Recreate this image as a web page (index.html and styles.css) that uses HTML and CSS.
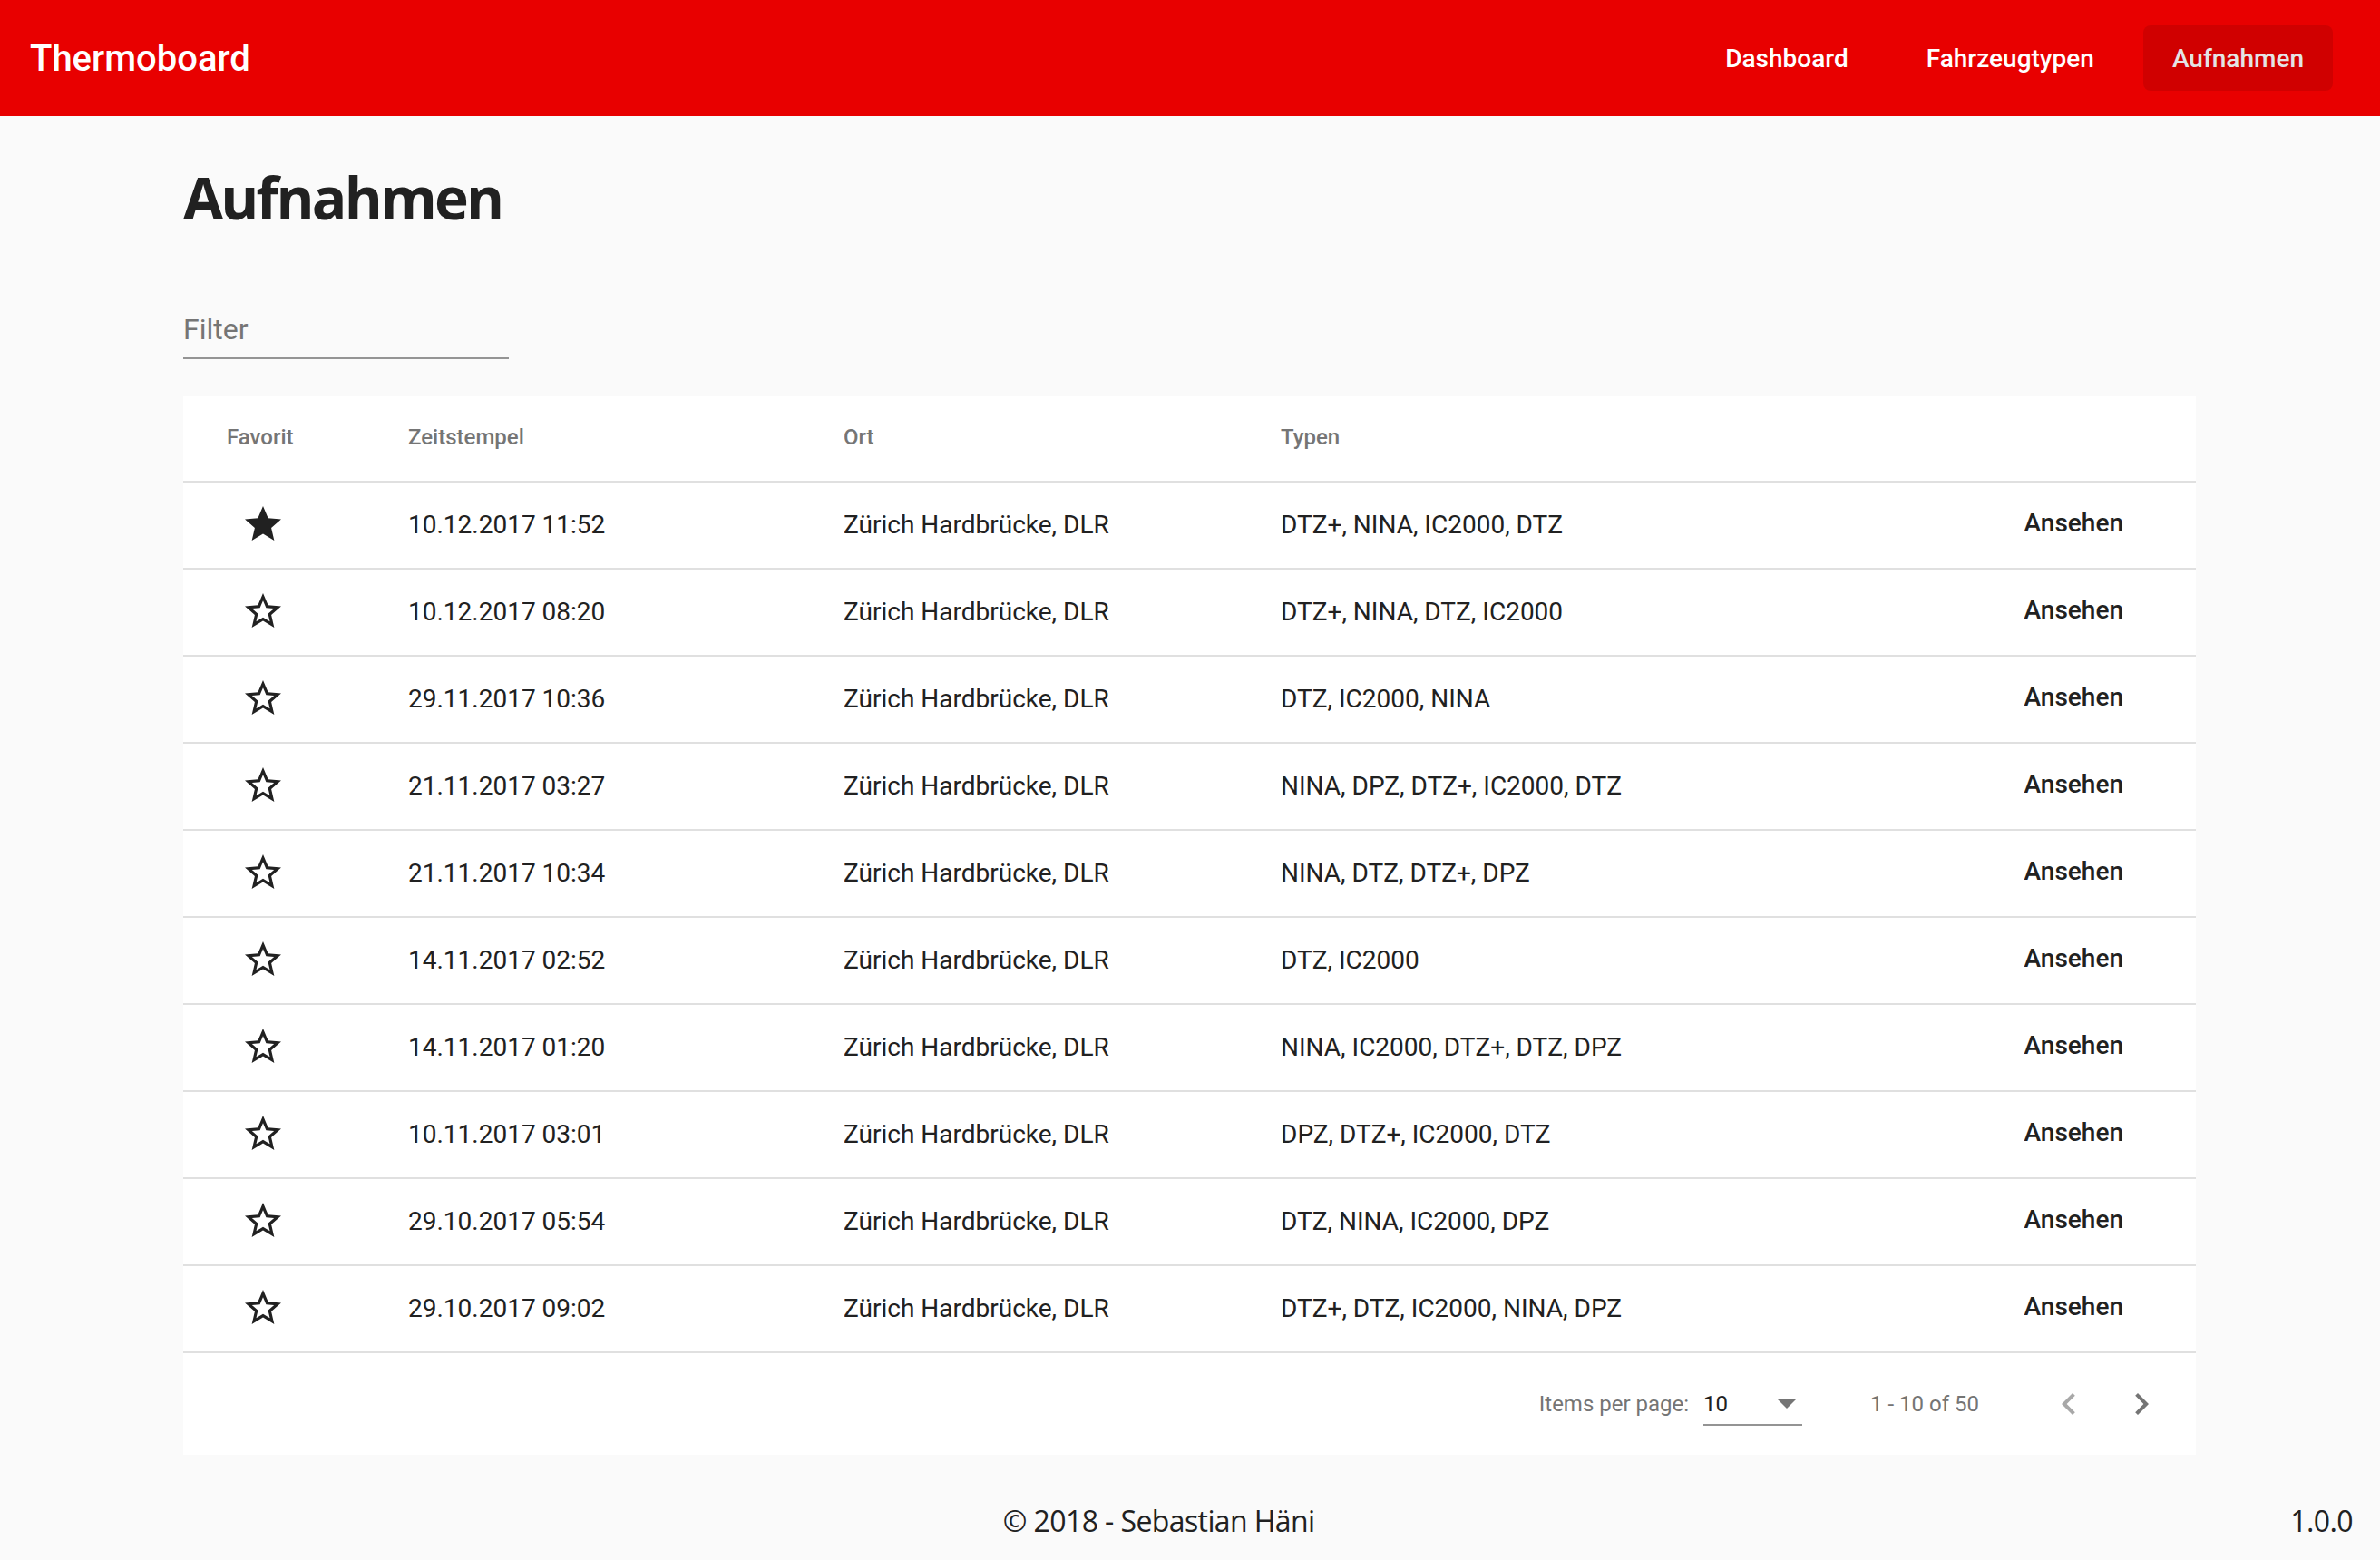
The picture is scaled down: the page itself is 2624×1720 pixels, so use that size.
FILE: index.html
```html
<!DOCTYPE html>
<html lang="de">
<head>
<meta charset="utf-8">
<title>Thermoboard</title>
<link rel="stylesheet" href="styles.css">
</head>
<body>
<header class="toolbar">
  <div class="brand">Thermoboard</div>
  <nav class="nav">
    <a class="nav-btn">Dashboard</a>
    <a class="nav-btn">Fahrzeugtypen</a>
    <a class="nav-btn active">Aufnahmen</a>
  </nav>
</header>
<main class="content">
  <h1 class="title">Aufnahmen</h1>
  <div class="filter">Filter</div>
  <section class="card">
    <div class="row head-row">
      <div>Favorit</div>
      <div>Zeitstempel</div>
      <div>Ort</div>
      <div>Typen</div>
      <div></div>
    </div>
    <div class="row">
      <div class="fav"><svg viewBox="0 0 24 24"><path d="M12 17.27L18.18 21l-1.64-7.03L22 9.240l-7.19-.61L12 2 9.19 8.63 2 9.24l5.46 4.73L5.82 21z"/></svg></div>
      <div class="cell">10.12.2017 11:52</div>
      <div class="cell">Zürich Hardbrücke, DLR</div>
      <div class="cell">DTZ+, NINA, IC2000, DTZ</div>
      <div class="view-btn">Ansehen</div>
    </div>
    <div class="row">
      <div class="fav"><svg viewBox="0 0 24 24"><path d="M22 9.24l-7.19-.62L12 2 9.19 8.63 2 9.24l5.46 4.73L5.82 21 12 17.27 18.18 21l-1.63-7.03L22 9.24zM12 15.4l-3.76 2.27 1-4.28-3.32-2.88 4.38-.38L12 6.1l1.710 4.04 4.38.38-3.32 2.88 1 4.28L12 15.4z"/></svg></div>
      <div class="cell">10.12.2017 08:20</div>
      <div class="cell">Zürich Hardbrücke, DLR</div>
      <div class="cell">DTZ+, NINA, DTZ, IC2000</div>
      <div class="view-btn">Ansehen</div>
    </div>
    <div class="row">
      <div class="fav"><svg viewBox="0 0 24 24"><path d="M22 9.24l-7.19-.62L12 2 9.19 8.63 2 9.24l5.46 4.73L5.82 21 12 17.27 18.18 21l-1.63-7.03L22 9.24zM12 15.4l-3.76 2.27 1-4.28-3.32-2.88 4.38-.38L12 6.1l1.710 4.04 4.38.38-3.32 2.88 1 4.28L12 15.4z"/></svg></div>
      <div class="cell">29.11.2017 10:36</div>
      <div class="cell">Zürich Hardbrücke, DLR</div>
      <div class="cell">DTZ, IC2000, NINA</div>
      <div class="view-btn">Ansehen</div>
    </div>
    <div class="row">
      <div class="fav"><svg viewBox="0 0 24 24"><path d="M22 9.24l-7.19-.62L12 2 9.19 8.63 2 9.24l5.46 4.73L5.82 21 12 17.27 18.18 21l-1.63-7.03L22 9.24zM12 15.4l-3.76 2.27 1-4.28-3.32-2.88 4.38-.38L12 6.1l1.710 4.04 4.38.38-3.32 2.88 1 4.28L12 15.4z"/></svg></div>
      <div class="cell">21.11.2017 03:27</div>
      <div class="cell">Zürich Hardbrücke, DLR</div>
      <div class="cell">NINA, DPZ, DTZ+, IC2000, DTZ</div>
      <div class="view-btn">Ansehen</div>
    </div>
    <div class="row">
      <div class="fav"><svg viewBox="0 0 24 24"><path d="M22 9.24l-7.19-.62L12 2 9.19 8.63 2 9.24l5.46 4.73L5.82 21 12 17.27 18.18 21l-1.63-7.03L22 9.24zM12 15.4l-3.76 2.27 1-4.28-3.32-2.88 4.38-.38L12 6.1l1.710 4.04 4.38.38-3.32 2.88 1 4.28L12 15.4z"/></svg></div>
      <div class="cell">21.11.2017 10:34</div>
      <div class="cell">Zürich Hardbrücke, DLR</div>
      <div class="cell">NINA, DTZ, DTZ+, DPZ</div>
      <div class="view-btn">Ansehen</div>
    </div>
    <div class="row">
      <div class="fav"><svg viewBox="0 0 24 24"><path d="M22 9.24l-7.19-.62L12 2 9.19 8.63 2 9.24l5.46 4.73L5.82 21 12 17.27 18.18 21l-1.63-7.03L22 9.24zM12 15.4l-3.76 2.27 1-4.28-3.32-2.88 4.38-.38L12 6.1l1.710 4.04 4.38.38-3.32 2.88 1 4.28L12 15.4z"/></svg></div>
      <div class="cell">14.11.2017 02:52</div>
      <div class="cell">Zürich Hardbrücke, DLR</div>
      <div class="cell">DTZ, IC2000</div>
      <div class="view-btn">Ansehen</div>
    </div>
    <div class="row">
      <div class="fav"><svg viewBox="0 0 24 24"><path d="M22 9.24l-7.19-.62L12 2 9.19 8.63 2 9.24l5.46 4.73L5.82 21 12 17.27 18.18 21l-1.63-7.03L22 9.24zM12 15.4l-3.76 2.27 1-4.28-3.32-2.88 4.38-.38L12 6.1l1.710 4.04 4.38.38-3.32 2.88 1 4.28L12 15.4z"/></svg></div>
      <div class="cell">14.11.2017 01:20</div>
      <div class="cell">Zürich Hardbrücke, DLR</div>
      <div class="cell">NINA, IC2000, DTZ+, DTZ, DPZ</div>
      <div class="view-btn">Ansehen</div>
    </div>
    <div class="row">
      <div class="fav"><svg viewBox="0 0 24 24"><path d="M22 9.24l-7.19-.62L12 2 9.19 8.63 2 9.24l5.46 4.73L5.82 21 12 17.27 18.18 21l-1.63-7.03L22 9.24zM12 15.4l-3.76 2.27 1-4.28-3.32-2.88 4.38-.38L12 6.1l1.710 4.04 4.38.38-3.32 2.88 1 4.28L12 15.4z"/></svg></div>
      <div class="cell">10.11.2017 03:01</div>
      <div class="cell">Zürich Hardbrücke, DLR</div>
      <div class="cell">DPZ, DTZ+, IC2000, DTZ</div>
      <div class="view-btn">Ansehen</div>
    </div>
    <div class="row">
      <div class="fav"><svg viewBox="0 0 24 24"><path d="M22 9.24l-7.19-.62L12 2 9.19 8.63 2 9.24l5.46 4.73L5.82 21 12 17.27 18.18 21l-1.63-7.03L22 9.24zM12 15.4l-3.76 2.27 1-4.28-3.32-2.88 4.38-.38L12 6.1l1.710 4.04 4.38.38-3.32 2.88 1 4.28L12 15.4z"/></svg></div>
      <div class="cell">29.10.2017 05:54</div>
      <div class="cell">Zürich Hardbrücke, DLR</div>
      <div class="cell">DTZ, NINA, IC2000, DPZ</div>
      <div class="view-btn">Ansehen</div>
    </div>
    <div class="row">
      <div class="fav"><svg viewBox="0 0 24 24"><path d="M22 9.24l-7.19-.62L12 2 9.19 8.63 2 9.24l5.46 4.73L5.82 21 12 17.27 18.18 21l-1.63-7.03L22 9.24zM12 15.4l-3.76 2.27 1-4.28-3.32-2.88 4.38-.38L12 6.1l1.710 4.04 4.38.38-3.32 2.88 1 4.28L12 15.4z"/></svg></div>
      <div class="cell">29.10.2017 09:02</div>
      <div class="cell">Zürich Hardbrücke, DLR</div>
      <div class="cell">DTZ+, DTZ, IC2000, NINA, DPZ</div>
      <div class="view-btn">Ansehen</div>
    </div>
    <div class="paginator">
      <div class="pg-label">Items per page:</div>
      <div class="pg-select"><span class="pg-value">10</span><span class="pg-arrow"></span></div>
      <div class="pg-range">1 - 10 of 50</div>
      <div class="pg-btn disabled"><svg viewBox="0 0 24 24"><path d="M15.41 7.41L14 6l-6 6 6 6 1.41-1.41L10.83 12z"/></svg></div>
      <div class="pg-btn"><svg viewBox="0 0 24 24"><path d="M10 6L8.59 7.41 13.17 12l-4.58 4.59L10 18l6-6z"/></svg></div>
    </div>
  </section>
</main>
<footer class="footer">
  <div class="copy">© 2018 - Sebastian Häni</div>
  <div class="version">1.0.0</div>
</footer>
</body>
</html>
```
FILE: styles.css
```css
* { box-sizing: border-box; }

body {
  margin: 0;
  background: #fafafa;
  font-family: Roboto, "Liberation Sans", sans-serif;
  color: #212121;
}

.toolbar {
  height: 128px;
  background: #e80000;
  display: flex;
  align-items: center;
  padding: 0 52px 0 33px;
  color: #fff;
}

.brand {
  flex: 1;
  font-size: 40px;
  font-weight: 500;
}

.nav {
  display: flex;
  gap: 22px;
}

.nav-btn {
  height: 72px;
  padding: 0 32px;
  border-radius: 8px;
  display: flex;
  align-items: center;
  font-size: 28px;
  font-weight: 500;
  color: #fff;
}

.nav-btn.active {
  background: #d00000;
  color: #e4e4e4;
}

.content {
  padding: 0 203px 0 202px;
}

.title {
  margin: 46px 0 0;
  font-family: "Open Sans", "Noto Sans", sans-serif;
  font-weight: 700;
  font-size: 64px;
  line-height: 88px;
  letter-spacing: -2.8px;
  color: #212121;
}

.filter {
  margin-top: 81px;
  width: 359px;
  padding-bottom: 11px;
  border-bottom: 2px solid #949494;
  font-size: 32px;
  line-height: 40px;
  color: #757575;
}

.card {
  margin-top: 41px;
  background: #fff;
}

.row {
  display: grid;
  grid-template-columns: 200px 480px 482px 1fr auto;
  align-items: center;
  height: 96px;
  padding: 0 48px 2px;
  border-bottom: 2px solid #e0e0e0;
}

.head-row {
  height: 95px;
  padding-bottom: 4px;
  font-size: 24px;
  font-weight: 500;
  color: #757575;
}

.cell {
  font-size: 28px;
  color: #212121;
}

.fav {
  width: 80px;
  height: 80px;
  display: flex;
  align-items: center;
  justify-content: center;
}

.fav svg {
  width: 48px;
  height: 48px;
  fill: #212121;
}

.view-btn {
  height: 72px;
  padding: 0 32px 3px;
  display: flex;
  align-items: center;
  font-size: 28px;
  font-weight: 500;
  color: #212121;
}

.paginator {
  height: 112px;
  display: flex;
  align-items: center;
  justify-content: flex-end;
  padding-right: 20px;
  font-size: 24px;
  color: #757575;
}

.pg-label {
  margin-right: 16px;
}

.pg-select {
  width: 109px;
  display: flex;
  align-items: center;
  justify-content: space-between;
  padding: 8px 7px 7px 0;
  border-bottom: 2px solid #949494;
  line-height: 30px;
}

.pg-value {
  color: #212121;
}

.pg-arrow {
  width: 0;
  height: 0;
  border-left: 10px solid transparent;
  border-right: 10px solid transparent;
  border-top: 10px solid #757575;
}

.pg-range {
  margin: 0 59px 0 75px;
}

.pg-btn {
  width: 80px;
  height: 80px;
  display: flex;
  align-items: center;
  justify-content: center;
}

.pg-btn svg {
  width: 48px;
  height: 48px;
  fill: #757575;
}

.pg-btn.disabled svg {
  fill: #a8a8a8;
}

.footer {
  margin-top: 36px;
  height: 72px;
  display: flex;
  align-items: center;
  padding: 0 30px;
  font-family: "Open Sans", "Noto Sans", sans-serif;
  font-size: 32px;
  letter-spacing: -0.6px;
  color: #212121;
}

.copy {
  flex: 1;
  text-align: center;
}
```
